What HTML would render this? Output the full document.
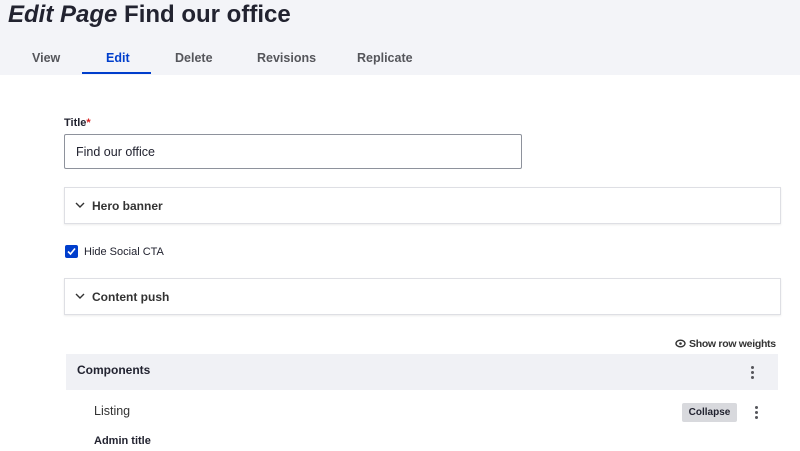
<!DOCTYPE html>
<html><head><meta charset="utf-8"><style>
*{margin:0;padding:0;box-sizing:border-box}
body{width:800px;height:451px;overflow:hidden;background:#fff;font-family:"Liberation Sans",sans-serif;color:#222330;position:relative}
.a{position:absolute;white-space:nowrap}
.hdr{position:absolute;left:0;top:0;width:800px;height:75px;background:#f3f4f8}
.tab{position:absolute;top:51px;font-size:12.5px;font-weight:bold;color:#55565b}
.box{position:absolute;left:64px;width:717px;height:37px;border:1px solid #dedfe4;box-shadow:0 1px 2px rgba(0,0,0,.08);background:#fff}
.sum{position:absolute;left:27px;top:11px;font-size:12px;font-weight:bold;color:#333}
.chev{position:absolute;left:10px;top:13px}
.dots{position:absolute;width:3px}
.dots i{display:block;width:3px;height:3px;border-radius:50%;background:#55565b;margin-bottom:2px}
</style></head><body>
<div class="hdr"></div>
<div class="a" style="left:8px;top:1px;font-size:24px;font-weight:bold;color:#222330"><i>Edit Page</i> Find our office</div>
<div class="tab" style="left:32px">View</div>
<div class="tab" style="left:106px;color:#003ecc">Edit</div>
<div class="a" style="left:82px;top:72px;width:69px;height:2px;background:#003ecc"></div>
<div class="tab" style="left:175px">Delete</div>
<div class="tab" style="left:257px">Revisions</div>
<div class="tab" style="left:357px">Replicate</div>

<div class="a" style="left:64px;top:117px;font-size:11px;font-weight:bold">Title<span style="color:#d72222">*</span></div>
<div class="a" style="left:64px;top:134px;width:458px;height:35px;border:1px solid #8e929c;border-radius:2px"></div>
<div class="a" style="left:76px;top:145px;font-size:12.5px">Find our office</div>

<div class="box" style="top:187px"><svg class="chev" width="10" height="8" viewBox="0 0 10 8"><path d="M1 2l4 4 4-4" stroke="#333" stroke-width="1.4" fill="none"/></svg><div class="sum">Hero banner</div></div>

<div class="a" style="left:65px;top:245px;width:13px;height:13px;background:#003ecc;border-radius:2px"><svg width="13" height="13" viewBox="0 0 13 13"><path d="M3 6.5l2.5 2.5 4.5-5.5" stroke="#fff" stroke-width="1.6" fill="none"/></svg></div>
<div class="a" style="left:84px;top:246px;font-size:11px">Hide Social CTA</div>

<div class="box" style="top:278px"><svg class="chev" width="10" height="8" viewBox="0 0 10 8"><path d="M1 2l4 4 4-4" stroke="#333" stroke-width="1.4" fill="none"/></svg><div class="sum">Content push</div></div>

<svg class="a" style="left:675px;top:339px" width="11" height="9" viewBox="0 0 11 9"><ellipse cx="5.5" cy="4.5" rx="4.5" ry="3.3" stroke="#333" stroke-width="1.4" fill="none"/><circle cx="5.5" cy="4.5" r="1.3" fill="#333"/></svg>
<div class="a" style="left:689px;top:338px;font-size:10.5px;font-weight:bold;color:#333;letter-spacing:-0.3px">Show row weights</div>

<div class="a" style="left:66px;top:354px;width:712px;height:36px;background:#f0f1f5"></div>
<div class="a" style="left:77px;top:363px;font-size:12px;font-weight:bold">Components</div>
<div class="dots" style="left:751px;top:366px"><i></i><i></i><i></i></div>

<div class="a" style="left:94px;top:404px;font-size:12.5px;color:#333">Listing</div>
<div class="a" style="left:682px;top:403px;width:55px;height:19px;background:#d8d9dd;border-radius:2px;font-size:10px;font-weight:bold;text-align:center;line-height:19px">Collapse</div>
<div class="dots" style="left:755px;top:406px"><i></i><i></i><i></i></div>
<div class="a" style="left:94px;top:435px;font-size:11px;font-weight:bold">Admin title</div>
</body></html>
